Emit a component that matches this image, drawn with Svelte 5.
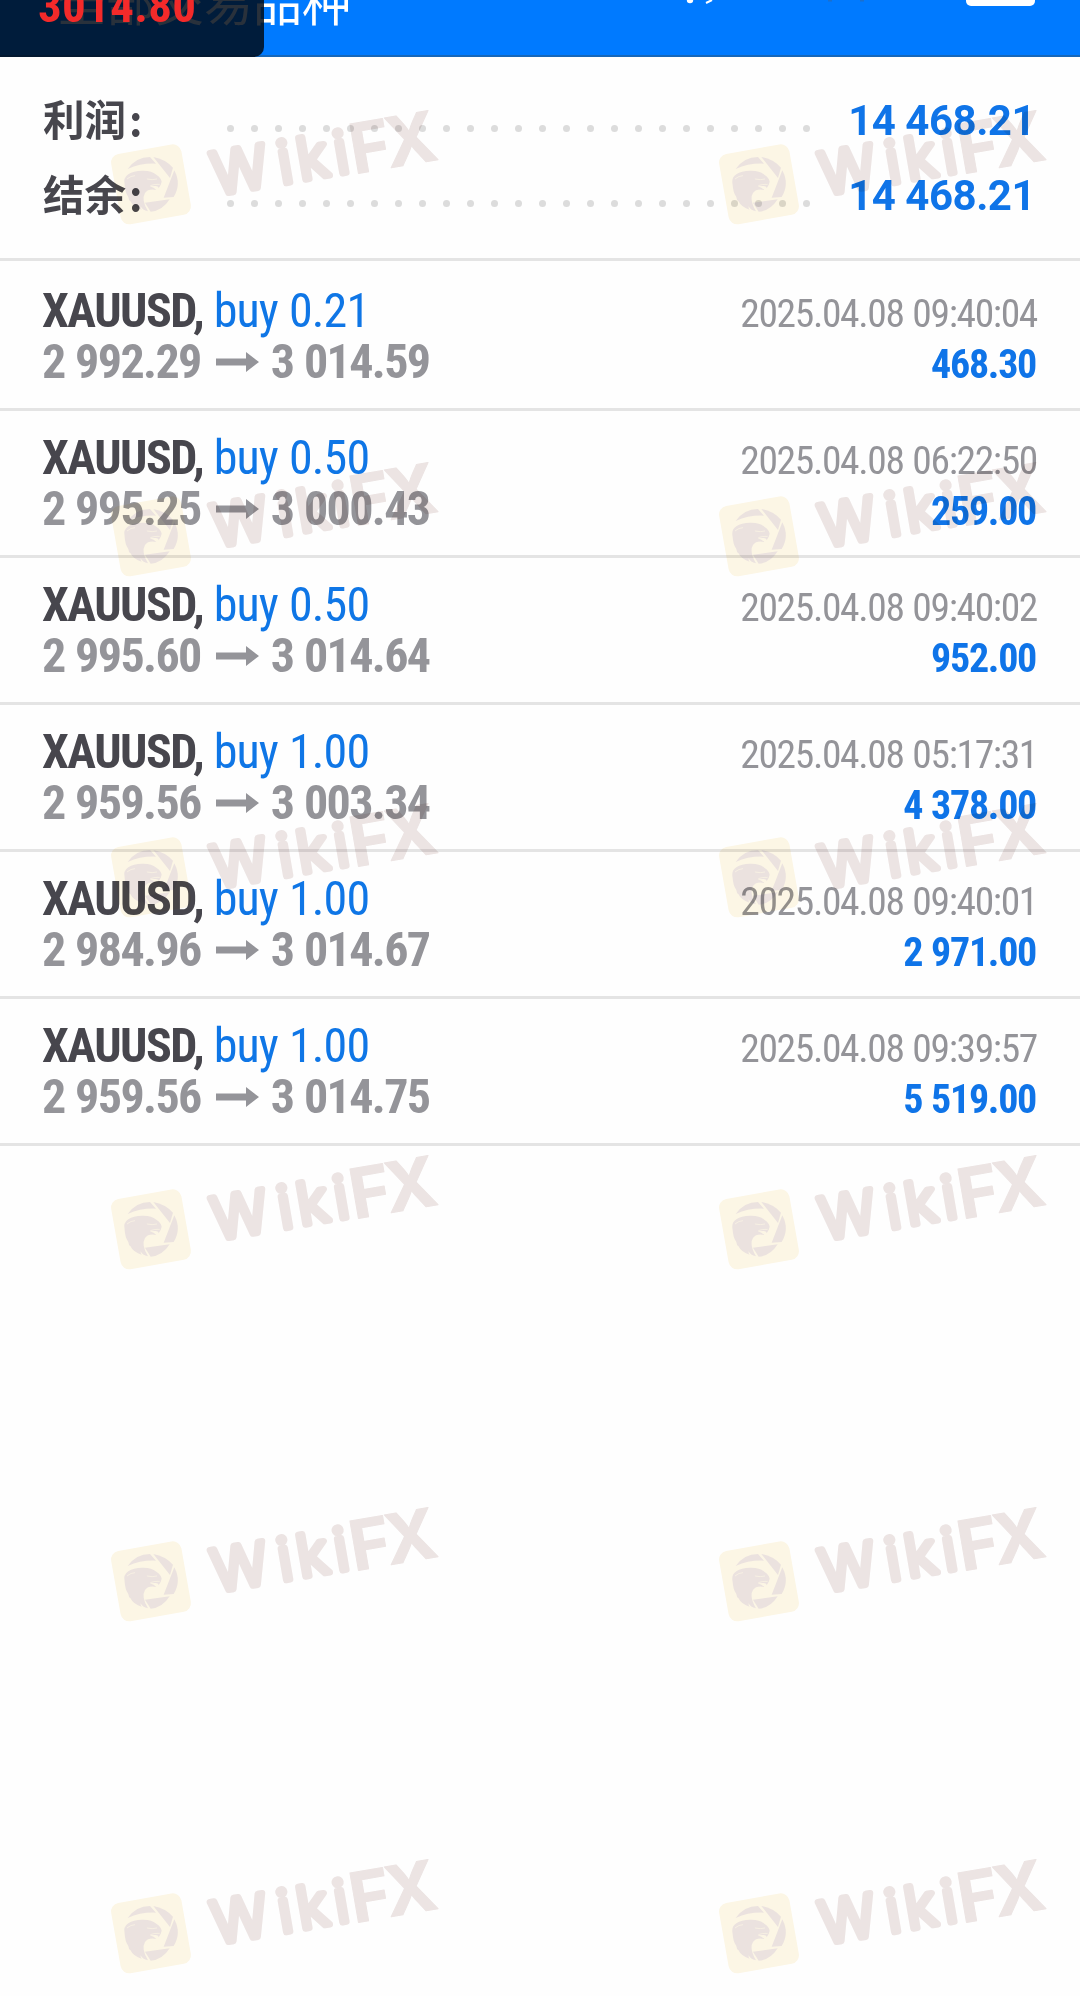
<script lang="ts">
	type Deal = {
		symbol: string;
		side: string;
		open: string;
		close: string;
		time: string;
		profit: string;
	};

	const summary = [
		{ label: '利润', value: '14 468.21' },
		{ label: '结余', value: '14 468.21' }
	];

	const deals: Deal[] = [
		{ symbol: 'XAUUSD', side: 'buy 0.21', open: '2 992.29', close: '3 014.59', time: '2025.04.08 09:40:04', profit: '468.30' },
		{ symbol: 'XAUUSD', side: 'buy 0.50', open: '2 995.25', close: '3 000.43', time: '2025.04.08 06:22:50', profit: '259.00' },
		{ symbol: 'XAUUSD', side: 'buy 0.50', open: '2 995.60', close: '3 014.64', time: '2025.04.08 09:40:02', profit: '952.00' },
		{ symbol: 'XAUUSD', side: 'buy 1.00', open: '2 959.56', close: '3 003.34', time: '2025.04.08 05:17:31', profit: '4 378.00' },
		{ symbol: 'XAUUSD', side: 'buy 1.00', open: '2 984.96', close: '3 014.67', time: '2025.04.08 09:40:01', profit: '2 971.00' },
		{ symbol: 'XAUUSD', side: 'buy 1.00', open: '2 959.56', close: '3 014.75', time: '2025.04.08 09:39:57', profit: '5 519.00' }
	];

	const dots = Array.from({ length: 25 }, (_, i) => i);

	const marks = [100, 452, 793, 1145, 1497, 1849].flatMap((top) =>
		[99, 707].map((left) => ({ left, top }))
	);
</script>

<div class="screen">
	<header>
		<h1>全部交易品种</h1>
		<svg class="actions" width="400" height="10" viewBox="0 0 400 10" aria-hidden="true">
			<circle cx="50" cy="0" r="3.2" fill="#fff" />
			<path d="M66 3L72 0" stroke="#fff" stroke-width="2" />
			<path d="M188 0h4M220 0h4" stroke="#1b6fce" stroke-width="3" />
			<rect x="326" y="-30" width="69" height="36" rx="5" fill="#fff" />
		</svg>
	</header>
	<div class="ticker"><span>3014.80</span></div>

	<section class="summary">
		{#each summary as item}
			<div class="total">
				<span class="label">{item.label}<i class="colon">:</i></span>
				<span class="dots">
					{#each dots as dot (dot)}
						<i></i>
					{/each}
				</span>
				<span class="value">{item.value}</span>
			</div>
		{/each}
	</section>

	<ul>
		{#each deals as deal}
			<li>
				<div class="line">
					<span><b class="symbol">{deal.symbol},</b> <span class="side">{deal.side}</span></span>
					<time>{deal.time}</time>
				</div>
				<div class="line">
					<span class="prices">
						<b>{deal.open}</b>
						<svg width="43" height="20" viewBox="0 0 43 20" aria-hidden="true">
							<path d="M0 6.5H30V0L43 10L30 20V13.5H0Z" fill="#949499" />
						</svg>
						<b>{deal.close}</b>
					</span>
					<b class="profit">{deal.profit}</b>
				</div>
			</li>
		{/each}
	</ul>

	<div class="watermarks" aria-hidden="true">
		{#each marks as mark}
			<svg style="left: {mark.left}px; top: {mark.top}px" width="350" height="140" viewBox="0 0 350 140">
				<g transform="translate(2 35) scale(0.3333)">
					<rect x="43" y="41" width="214" height="214" rx="26" transform="rotate(-10 150 148)" fill="#fdf7e6" />
					<g fill="#ece3e0">
						<path d="M80 102Q105 66 147 66L165 86Q120 84 80 102Z" />
						<path d="M157 66Q192 72 216 98L207 129Z" />
						<path d="M220 106Q242 148 218 186L188 188Z" />
						<path d="M132 203L206 193Q184 228 149 230Z" />
						<path d="M71 150Q66 128 82 118Q98 106 128 107Q152 107 166 119Q180 128 182 140Q180 151 173 160Q172 153 163 153L146 154Q160 158 166 165Q142 160 132 174Q120 194 141 229Q124 226 119 214Q118 222 122 224Q98 218 88 198Q84 198 82 186Q72 172 71 150Z" />
					</g>
					<path d="M138 132Q154 136 168 132M148 152Q160 147 176 148M78 132Q90 122 102 122" fill="none" stroke="#fdf7e6" stroke-width="2" />
				</g>
				<g class="brand" transform="translate(117 98) rotate(-9.8)">
					<text class="soft" x="0 67 86.5 124" y="-3">Wiki</text>
					<text class="hard" x="140 176" y="0">FX</text>
				</g>
			</svg>
		{/each}
	</div>
</div>

<style>
	:global(body) {
		background: #fefefe;
	}

	.screen {
		position: relative;
		width: 1080px;
		height: 1996px;
		overflow: hidden;
		background: #fefefe;
		font-family: 'Roboto Condensed', Roboto, 'Noto Sans CJK SC', sans-serif;
		color: #47464d;
	}

	header {
		display: flex;
		justify-content: space-between;
		box-sizing: border-box;
		height: 57px;
		padding: 0 40px 0 57px;
		overflow: hidden;
		background: #007aff;
		border-bottom: 2px solid #1767b9;
	}

	h1 {
		margin: -35px 0 0;
		font: 400 49px/70px 'Noto Sans CJK SC', sans-serif;
		color: #fff;
	}

	.actions {
		flex: none;
	}

	/* price overlay floating above the title */
	.ticker {
		position: absolute;
		top: 0;
		left: 0;
		width: 264px;
		height: 57px;
		overflow: hidden;
		border-radius: 0 0 10px 0;
		background: rgba(0, 9, 22, 0.84);
	}

	.ticker span {
		display: block;
		margin: -23px 0 0 38px;
		font: 700 47px/58px 'Roboto Condensed', Roboto, sans-serif;
		letter-spacing: 0.3px;
		color: #f32a2a;
	}

	.summary {
		box-sizing: border-box;
		height: 204px;
		padding: 26px 45px 0 43px;
		border-bottom: 3px solid #e4e4e4;
	}

	.total {
		display: flex;
		align-items: center;
		height: 75px;
	}

	.label {
		width: 184px;
		margin-top: -4px;
		font: 700 41.5px/75px 'Noto Sans CJK SC', sans-serif;
	}

	.colon {
		margin-left: 3px;
		font-style: normal;
	}

	.dots {
		display: flex;
		gap: 17px;
		padding-top: 15px;
	}

	.dots i {
		width: 7px;
		height: 7px;
		border-radius: 50%;
		background: #dcdcdc;
	}

	.value {
		margin-left: auto;
		font: 700 42px/75px Roboto, sans-serif;
		letter-spacing: -0.5px;
		color: #0f74e8;
	}

	ul {
		margin: 0;
		padding: 0;
		list-style: none;
	}

	li {
		box-sizing: border-box;
		height: 147px;
		padding: 21px 43px 0 42px;
		border-bottom: 3px solid #e4e4e4;
	}

	li:first-child {
		height: 150px;
		padding-top: 24px;
	}

	.line {
		display: flex;
		align-items: baseline;
		justify-content: space-between;
		height: 51px;
		font-size: 48px;
		line-height: 51px;
		letter-spacing: -1.6px;
		word-spacing: 1px;
		white-space: pre;
	}

	.symbol {
		letter-spacing: -1.5px;
	}

	.side {
		color: #0f76e6;
		letter-spacing: -0.9px;
	}

	.prices {
		display: flex;
		align-items: baseline;
		color: #949499;
	}

	.prices svg {
		position: relative;
		top: -6px;
		margin: 0 12px 0 15px;
	}

	time {
		font-size: 39.5px;
		letter-spacing: -1.35px;
		color: #949499;
	}

	.profit {
		margin-right: 1px;
		font-size: 40px;
		letter-spacing: -1.3px;
		color: #0f74e8;
	}

	.watermarks svg {
		position: absolute;
		overflow: visible;
		mix-blend-mode: multiply;
	}

	.brand {
		fill: #ede5e4;
		stroke: #ede5e4;
		stroke-linejoin: round;
		stroke-linecap: round;
	}

	.soft {
		font: 300 58px Inter, sans-serif;
		stroke-width: 6.5px;
	}

	.hard {
		font: 700 69px Inter, sans-serif;
		stroke-width: 1px;
	}
</style>
